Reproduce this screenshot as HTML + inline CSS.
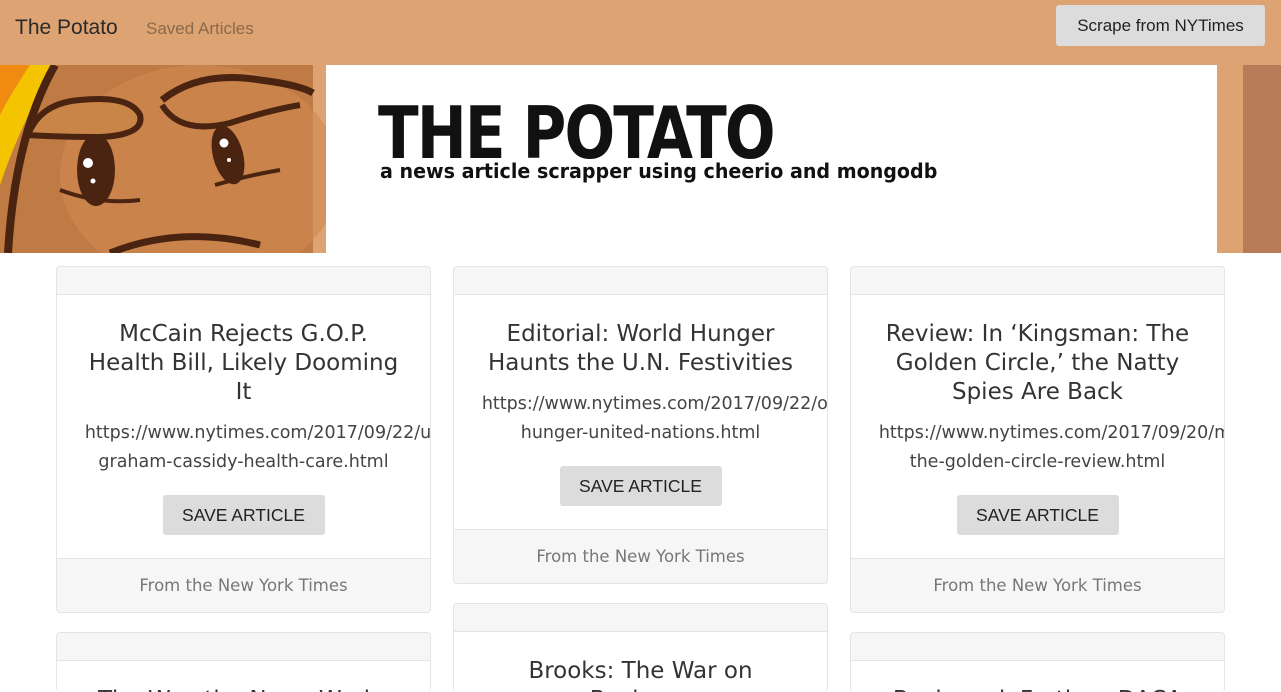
<!DOCTYPE html>
<html><head><meta charset="utf-8"><style>
*{box-sizing:border-box;margin:0;padding:0}
html,body{width:1281px;height:692px;overflow:hidden}
body{background:#fff;font-family:"DejaVu Sans","Liberation Sans",sans-serif;position:relative}
.nav{position:absolute;left:0;top:0;width:1281px;height:65px;background:#dda373}
.brand{position:absolute;left:15px;top:16px;font-size:21px;color:#2a2a2a;font-family:"Liberation Sans",sans-serif}
.saved{position:absolute;left:146px;top:19px;font-size:17px;color:#8a6a4c;font-family:"Liberation Sans",sans-serif}
.scrape{position:absolute;left:1056px;top:5px;width:209px;height:41px;background:#dcdcdc;border-radius:3px;font:17px "Liberation Sans",sans-serif;color:#222;text-align:center;line-height:41px}
.banner{position:absolute;top:65px;left:0;width:1281px;height:188px;background:#dda373}
.white{position:absolute;left:326px;top:0;width:891px;height:188px;background:#fff}
.brown{position:absolute;left:1243px;top:0;width:38px;height:188px;background:#b97b58}
.h1{position:absolute;left:52px;top:26px;font:bold 72px "DejaVu Sans Condensed","Liberation Sans",sans-serif;color:#111;letter-spacing:-2px;transform:scaleX(.92);transform-origin:0 0}
.sub{position:absolute;left:54px;top:94px;font:bold 20px "DejaVu Sans Condensed","Liberation Sans",sans-serif;color:#111;transform:scaleX(1.06);transform-origin:0 0}
.card{position:absolute;width:375px;border:1px solid #e4e4e6;border-radius:4px;background:#fff;overflow:hidden}
.ch{height:28px;background:#f6f6f7;border-bottom:1px solid #e4e4e6}
.cb{text-align:center;padding-top:25px}
.t{font-size:23px;line-height:29px;color:#333;padding:0 24px}
.u{font-size:17.5px;line-height:29px;color:#444;margin-top:12px;white-space:nowrap;overflow:hidden}
.btn{display:inline-block;width:162px;height:40px;background:#dcdcdc;border-radius:3px;font:17.5px "Liberation Sans",sans-serif;color:#222;line-height:40px;margin:18px 0 23px}
.cf{height:54px;background:#f6f6f7;border-top:1px solid #e4e4e6;text-align:center;line-height:54px;font-size:16.5px;color:#777}
</style></head><body>
<div class="nav"><div class="brand">The Potato</div><div class="saved">Saved Articles</div><div class="scrape">Scrape from NYTimes</div></div>
<div class="banner">
<svg width="326" height="188" style="position:absolute;left:0;top:0">
<rect width="326" height="188" fill="#dda373"/>
<rect width="313" height="188" fill="#c07a44"/>
<path d="M0 0 H55 Q20 60 0 120 Z" fill="#f5c400"/>
<path d="M0 0 H30 Q10 30 0 50Z" fill="#f08a10"/>
<path d="M55 0 Q15 70 8 188" stroke="#4a2410" stroke-width="8" fill="none"/>
<ellipse cx="200" cy="110" rx="140" ry="110" fill="#d08a50" opacity=".6"/>
<path d="M28 70 Q40 38 80 35 Q130 30 140 50 Q145 70 100 72 Q60 72 28 70Z" fill="#c98448" stroke="#4a2410" stroke-width="6"/>
<path d="M162 35 Q200 5 260 15 Q300 20 313 28" stroke="#4a2410" stroke-width="7" fill="none"/>
<path d="M162 40 Q180 70 230 58 Q270 45 300 40" stroke="#4a2410" stroke-width="6" fill="none"/>
<ellipse cx="96" cy="105" rx="19" ry="36" fill="#4a2410"/>
<ellipse cx="228" cy="90" rx="15" ry="30" fill="#4a2410" transform="rotate(-15 228 90)"/>
<circle cx="88" cy="98" r="5" fill="#fff"/><circle cx="93" cy="116" r="2.5" fill="#fff"/>
<circle cx="224" cy="78" r="4.5" fill="#fff"/><circle cx="229" cy="95" r="2" fill="#fff"/>
<path d="M60 125 Q100 140 140 135" stroke="#4a2410" stroke-width="4" fill="none"/>
<path d="M215 120 Q250 110 280 105" stroke="#4a2410" stroke-width="4" fill="none"/>
<path d="M110 188 Q180 160 260 180" stroke="#4a2410" stroke-width="7" fill="none"/>
</svg>
<div class="white"><div class="h1">THE POTATO</div><div class="sub">a news article scrapper using cheerio and mongodb</div></div>
<div class="brown"></div>
</div>

<div class="card" style="left:56px;top:266px"><div class="ch"></div><div class="cb">
<div class="t">McCain Rejects G.O.P. Health Bill, Likely Dooming It</div>
<div class="u">&nbsp;&nbsp;&nbsp;&nbsp;&nbsp;https://www.nytimes.com/2017/09/22/us/<br>graham-cassidy-health-care.html</div>
<div class="btn">SAVE ARTICLE</div></div><div class="cf">From the New York Times</div></div>

<div class="card" style="left:453px;top:266px"><div class="ch"></div><div class="cb">
<div class="t">Editorial: World Hunger Haunts the U.N. Festivities</div>
<div class="u">&nbsp;&nbsp;&nbsp;&nbsp;&nbsp;https://www.nytimes.com/2017/09/22/opinion/<br>hunger-united-nations.html</div>
<div class="btn">SAVE ARTICLE</div></div><div class="cf">From the New York Times</div></div>

<div class="card" style="left:850px;top:266px"><div class="ch"></div><div class="cb">
<div class="t">Review: In ‘Kingsman: The Golden Circle,’ the Natty Spies Are Back</div>
<div class="u">&nbsp;&nbsp;&nbsp;&nbsp;&nbsp;https://www.nytimes.com/2017/09/20/movies/<br>the-golden-circle-review.html</div>
<div class="btn">SAVE ARTICLE</div></div><div class="cf">From the New York Times</div></div>

<div class="card" style="left:56px;top:632px;height:60px;border-bottom:0"><div class="ch"></div><div class="cb"><div class="t">The Way the News Works</div></div></div>
<div class="card" style="left:453px;top:603px;height:89px;border-bottom:0"><div class="ch"></div><div class="cb"><div class="t">Brooks: The War on Business</div></div></div>
<div class="card" style="left:850px;top:632px;height:60px;border-bottom:0"><div class="ch"></div><div class="cb"><div class="t">Backward, Further: DACA</div></div></div>
</body></html>
